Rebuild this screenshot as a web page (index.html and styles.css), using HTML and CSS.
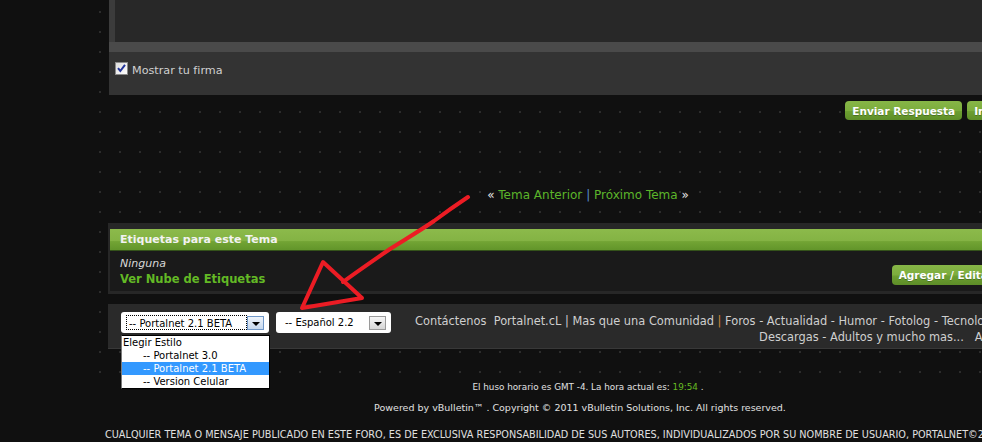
FILE: index.html
```html
<!DOCTYPE html>
<html lang="es">
<head>
<meta charset="utf-8">
<title>Portalnet - Responder</title>
<link rel="stylesheet" href="styles.css">
</head>
<body>
<div class="page">
  <div class="board">
    <section class="editor">
      <div class="editor-frame"><div class="textarea"></div></div>
      <div class="editor-band"></div>
      <label class="sig">
        <svg class="checkbox" width="13" height="13" viewBox="0 0 13 13">
          <defs><linearGradient id="cbg" x1="0" y1="0" x2="1" y2="1"><stop offset="0" stop-color="#dcdcdc"/><stop offset="1" stop-color="#ffffff"/></linearGradient></defs>
          <rect x="0.5" y="0.5" width="12" height="12" fill="url(#cbg)" stroke="#8a8a8a"/>
          <path d="M3 6.2 L5.3 9 L10 2.8" fill="none" stroke="#23359a" stroke-width="2"/>
        </svg>
        <span class="sig-text">Mostrar tu firma</span>
      </label>
    </section>

    <div class="actions">
      <span class="btn">Enviar Respuesta</span>
      <span class="btn">Ir Avanzado</span>
    </div>

    <nav class="topic-nav">
      <span class="quo">«</span> <a class="lnk">Tema Anterior</a> <span class="sep">|</span> <a class="lnk">Próximo Tema</a> <span class="quo">»</span>
    </nav>

    <section class="tags">
      <div class="tags-head">Etiquetas para este Tema</div>
      <div class="tags-body">
        <div class="tags-info">
          <em class="none">Ninguna</em>
          <a class="cloud">Ver Nube de Etiquetas</a>
        </div>
        <span class="btn btn-tags">Agregar / Editar Etiquetas</span>
      </div>
    </section>

    <div class="footbar">
      <div class="selwrap">
        <div class="selbox sel-style">
          <span class="sel-text focus">-- Portalnet 2.1 BETA</span>
          <span class="arrowbtn hot"><i></i></span>
        </div>
        <ul class="dropdown">
          <li class="opt">Elegir Estilo</li>
          <li class="opt sub">-- Portalnet 3.0</li>
          <li class="opt sub active">-- Portalnet 2.1 BETA</li>
          <li class="opt sub">-- Version Celular</li>
        </ul>
      </div>
      <div class="selbox sel-lang">
        <span class="sel-text">-- Español 2.2</span>
        <span class="arrowbtn"><i></i></span>
      </div>
      <div class="footlinks">
        <div class="fl-1">Contáctenos&nbsp; Portalnet.cL | Mas que una Comunidad <span class="or">|</span> Foros - Actualidad - Humor - Fotolog - Tecnología -</div>
        <div class="fl-2">Descargas - Adultos y mucho mas...&nbsp;&nbsp; Archivo - Arriba</div>
      </div>
    </div>
  </div>

  <div class="credits">
    <div class="tz">El huso horario es GMT -4. La hora actual es: <span class="time">19:54</span> .</div>
    <div class="pw">Powered by vBulletin™ . Copyright © 2011 vBulletin Solutions, Inc. All rights reserved.</div>
    <div class="disc">CUALQUIER TEMA O MENSAJE PUBLICADO EN ESTE FORO, ES DE EXCLUSIVA RESPONSABILIDAD DE SUS AUTORES, INDIVIDUALIZADOS POR SU NOMBRE DE USUARIO, PORTALNET©2011 NO SE HACE RESPONSABLE.</div>
  </div>
</div>

<svg class="scribble" width="982" height="442" viewBox="0 0 982 442">
  <path d="M468 197 C456 205 446 212 434 221 C418 232 404 240 390 249 C374 260 358 271 343 282" fill="none" stroke="#ec1c24" stroke-width="4" stroke-linecap="round" stroke-linejoin="round"/>
  <path d="M323 262 L302 308 L362 298 Z" fill="none" stroke="#ec1c24" stroke-width="4" stroke-linecap="round" stroke-linejoin="round"/>
</svg>
</body>
</html>
```

FILE: styles.css
```css
html, body {
  margin: 0;
  padding: 0;
  height: 100%;
  overflow: hidden;
  background: #101010;
}

body {
  position: relative;
  font-family: "DejaVu Sans", Verdana, sans-serif;
  color: #cccccc;
}

.page {
  margin-left: 99px;
  width: 962px;
}

.board {
  background-color: #101010;
  background-image: conic-gradient(from 270deg at 2px 2px, #2c2c2c 25%, transparent 0);
  background-size: 20px 20px;
  background-position: 0 11px;
  padding-bottom: 30px;
  display: flex;
  flex-direction: column;
}

/* editor panel */
.editor {
  margin: 0 10px 0 10px;
  height: 95px;
  background: #333333;
}
.editor-frame {
  display: flex;
  height: 42px;
  background: #3c3c3c;
  padding-left: 6px;
}
.textarea {
  flex: 1;
  background: #282828;
}
.editor-band {
  height: 10px;
  background: #4a4a4a;
}
.sig {
  display: flex;
  align-items: center;
  gap: 4px;
  margin: 10px 0 0 6px;
  height: 13px;
  font-size: 11.2px;
  color: #d0d0d0;
}
.sig-text { padding-top: 3px; }
.checkbox { display: block; }

/* buttons */
.actions {
  display: flex;
  justify-content: flex-end;
  gap: 5px;
  margin: 6px 10px 0 0;
}
.btn {
  display: inline-flex;
  align-items: center;
  height: 19px;
  padding: 0 7px;
  border-radius: 4px;
  background: linear-gradient(#87b647, #7cad3d 50%, #6c9e31 55%, #5e8e28);
  color: #ffffff;
  font-weight: bold;
  font-size: 10.5px;
  white-space: nowrap;
  text-shadow: 0 1px 0 rgba(0, 0, 0, 0.25);
}

/* topic nav */
.topic-nav {
  margin-top: 67px;
  line-height: 16px;
  height: 16px;
  text-align: center;
  padding-left: 16px;
  font-size: 12px;
}
.quo { color: #e6e6e6; }
.lnk { color: #5cb52a; }
.sep { color: #5a8fd0; }

/* tags */
.tags {
  margin: 20px 1px 0 9px;
  background: #272727;
  padding: 6px 0 3px 2px;
}
.tags-head {
  height: 21px;
  line-height: 21px;
  border-bottom: 1px solid #34521a;
  background: linear-gradient(#8cba4b, #84b344 55%, #72a434 60%, #62952a);
  color: #f2f2f2;
  font-weight: bold;
  font-size: 11px;
  padding-left: 10px;
}
.tags-body {
  height: 40px;
  background: #1a1a1a;
  display: flex;
  justify-content: space-between;
  padding-left: 10px;
}
.tags-info {
  display: flex;
  flex-direction: column;
  padding-top: 5px;
}
.none {
  line-height: 15px;
  font-size: 11px;
  color: #d8d8d8;
}
.cloud {
  line-height: 16px;
  font-size: 11.5px;
  font-weight: bold;
  color: #63b925;
}
.btn-tags {
  margin-top: 14px;
  height: 20px;
}

/* footer bar */
.footbar {
  margin: 10px -10px 0 9px;
  height: 36px;
  background: #2a2a2a;
  border-bottom: 1px solid #383838;
  display: flex;
  align-items: flex-start;
  padding: 8px 8px 0 13px;
}
.selwrap { position: relative; }
.selbox {
  display: flex;
  align-items: center;
  height: 21px;
  background: #ffffff;
  border-radius: 3px;
  box-sizing: border-box;
  font-size: 10px;
  color: #000;
}
.sel-style {
  width: 148px;
  padding: 0 5px;
}
.sel-lang {
  width: 115px;
  margin-left: 7px;
  padding: 0 5px 0 9px;
}
.sel-text {
  flex: 1;
  white-space: nowrap;
}
.sel-text.focus {
  height: 15px;
  line-height: 15px;
  box-sizing: border-box;
  border: 1px dotted #000;
  padding-left: 2px;
}
.arrowbtn {
  width: 17px;
  height: 14px;
  box-sizing: border-box;
  border: 1px solid #9a9a9a;
  background: linear-gradient(#f6f6f6, #d6d6d6);
  display: flex;
  align-items: center;
  justify-content: center;
}
.arrowbtn.hot {
  border-color: #6f97c8;
  background: linear-gradient(#eef4fb, #c6d8ee);
}
.arrowbtn i {
  width: 0;
  height: 0;
  border-left: 4px solid transparent;
  border-right: 4px solid transparent;
  border-top: 4px solid #000;
  margin-top: 2px;
}
.dropdown {
  position: absolute;
  left: 0;
  top: 23px;
  width: 149px;
  margin: 0;
  padding: 0;
  list-style: none;
  background: #ffffff;
  border: 1px solid #000;
  border-left-color: #7a7a7a;
  box-sizing: border-box;
  font-size: 10px;
  color: #000;
  z-index: 2;
}
.opt {
  height: 13px;
  line-height: 13px;
  padding-left: 1px;
  white-space: nowrap;
}
.opt.sub { padding-left: 21px; }
.opt.active {
  background: #3399ff;
  color: #ffffff;
}
.footlinks {
  flex: 1;
  margin-left: 24px;
  margin-top: 1px;
  font-size: 11.4px;
  line-height: 16px;
  color: #cfcfcf;
  white-space: nowrap;
}
.fl-1 { text-align: left; }
.fl-2 { text-align: right; }
.or { color: #d08a3c; }

/* credits */
.credits {
  padding-top: 2px;
  text-align: center;
  color: #e0e0e0;
}
.tz {
  line-height: 12px;
  padding-left: 16px;
  font-size: 8.8px;
}
.time { color: #66bb22; }
.pw {
  margin-top: 9px;
  line-height: 12px;
  font-size: 9.5px;
}
.disc {
  margin-top: 15px;
  line-height: 12px;
  text-align: left;
  padding-left: 6px;
  white-space: nowrap;
  font-size: 9.7px;
}

.scribble {
  position: absolute;
  left: 0;
  top: 0;
  pointer-events: none;
}
```
